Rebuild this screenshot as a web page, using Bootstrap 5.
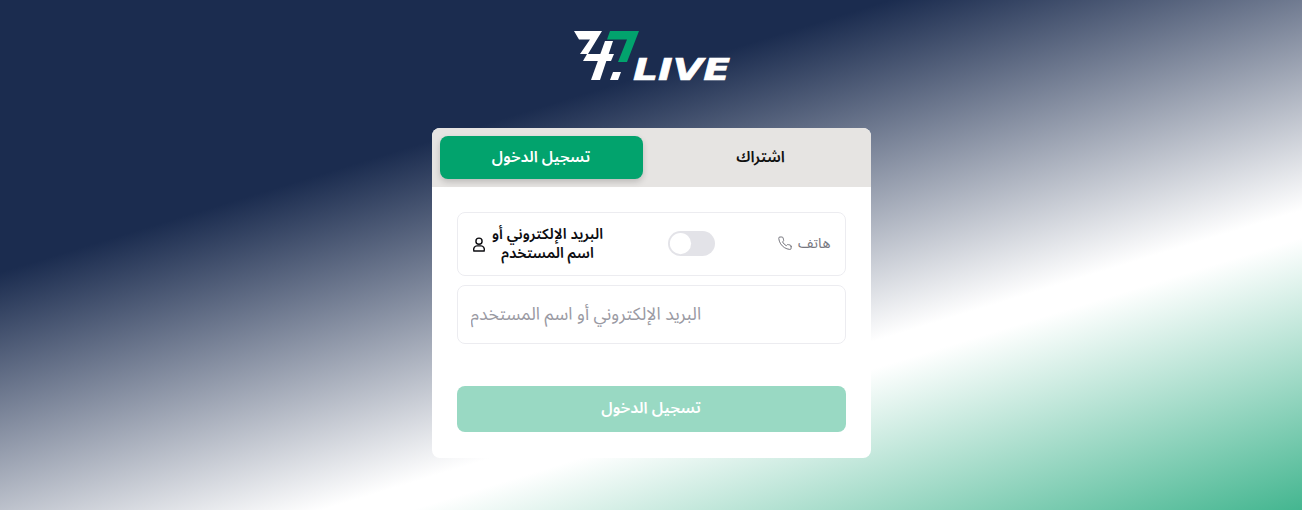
<!DOCTYPE html>
<html lang="ar" dir="rtl">
<head>
<meta charset="utf-8">
<title>77.LIVE</title>
<link rel="stylesheet" href="https://cdn.jsdelivr.net/npm/bootstrap@5.3.0/dist/css/bootstrap.min.css">
<style>
html,body{height:100%}
body{margin:0;height:510px;overflow:hidden;font-family:"Noto Sans","Noto Sans Arabic","DejaVu Sans",sans-serif;
  background:linear-gradient(163deg,#1b2c4f 0%,#1b2c4f 30%,#ffffff 67%,#ffffff 70%,#44b690 100%)}
.brand{height:128px;padding-top:30px}
.brand-box{position:relative;width:158px;height:52px}
.brand-box svg{display:block}
.brand-word{position:absolute;left:61px;top:25px;font:italic 700 31px/28px "DejaVu Sans",sans-serif;color:#fff;direction:ltr;transform:scaleX(1.27);transform-origin:left center;-webkit-text-stroke:.6px #fff}
.panel{width:439px;height:330px;border-radius:8px;background:#fff;overflow:hidden}
.tabbar{height:59px;background:#e6e4e2;padding:8px 0 8px 8px}
.tab-item{width:203px;height:43px;border:0;border-radius:8px;background:transparent;font-size:15.6px;font-weight:600;color:#111;padding:0 0 2px}
.tab-on{background:#02a36d;color:#fff;box-shadow:0 3px 6px rgba(0,0,0,.18)}
.tab-off{width:220px}
.formbody{padding:25px 25px 0}
.mode-row{height:64px;border:1px solid #ececf0;border-radius:8px;padding:0 14px}
.mode-phone{color:#77777f;font-size:14.400px;gap:5px;padding-bottom:3px}
.mode-phone svg{margin-top:2px}
.mode-mail{color:#0c0c10;font-size:14.800px;font-weight:600;line-height:19px;gap:5px;width:133px}
.mode-mail span{width:114px;text-align:center;padding-bottom:3px}
.form-switch .toggle-box{float:none;margin:0;width:47px;height:25px;background-color:#e3e3e8;border:0;
  --bs-form-switch-bg:url("data:image/svg+xml,%3csvg xmlns='http://www.w3.org/2000/svg' viewBox='-4 -4 8 8'%3e%3ccircle r='3.4' fill='%23fff'/%3e%3c/svg%3e")}
.form-switch.toggle-wrap{padding:0;margin:0 0 1px 1px;min-height:0;display:flex}
.entry{height:59px;margin-top:9px;border:1px solid #ececf0;border-radius:8px;padding:0 13px 4px;font-size:17.600px;box-shadow:none}
.entry::placeholder{color:#9a9aa3;text-align:left}
.submit-btn{width:100%;height:46px;margin-top:42px;border:0;border-radius:8px;background:#99d9c3;color:#fff;font-size:15.8px;font-weight:600;padding:0 0 2px}
</style>
</head>
<body>
<header class="brand d-flex justify-content-center">
  <div class="brand-box" dir="ltr">
    <svg width="158" height="52" viewBox="0 0 158 52" aria-hidden="true">
      <polygon fill="#fff" points="2,1 30,1 16,24 8,24 18,9.500 7,9.500"/>
      <polygon fill="#fff" points="15,24 42,24 39,31 11,31"/>
      <polygon fill="#fff" points="33,11 41,11 28,50 19,50"/>
      <polygon fill="#02a36d" points="38,1 67,1 55,32 46,32 55,9.500 35,9.500"/>
      <polygon fill="#fff" points="41,42 49,42 46,50 38,50"/>
    </svg>
    <span class="brand-word">LIVE</span>
  </div>
</header>
<main class="panel mx-auto">
  <div class="tabbar d-flex justify-content-between">
    <button type="button" class="tab-item tab-off btn">اشتراك</button>
    <button type="button" class="tab-item tab-on btn">تسجيل الدخول</button>
  </div>
  <form class="formbody">
    <div class="mode-row d-flex align-items-center justify-content-between">
      <div class="mode-phone d-flex align-items-center">
        <span>هاتف</span>
        <svg width="15" height="15" viewBox="0 0 24 24" fill="none" stroke="currentColor" stroke-width="1.6" stroke-linecap="round" stroke-linejoin="round" aria-hidden="true"><path d="M21 16.5v3a2 2 0 0 1-2.2 2 19.8 19.8 0 0 1-8.6-3 19.5 19.5 0 0 1-6-6 19.8 19.8 0 0 1-3-8.7A2 2 0 0 1 3.2 1.6h3a2 2 0 0 1 2 1.7c.1 1 .4 1.900.7 2.800a2 2 0 0 1-.4 2.100L7.200 9.500a16 16 0 0 0 6 6l1.300-1.300a2 2 0 0 1 2.100-.4c.9.3 1.800.6 2.800.7a2 2 0 0 1 1.600 2z"/></svg>
      </div>
      <div class="form-check form-switch toggle-wrap">
        <input class="form-check-input toggle-box" type="checkbox" role="switch" aria-label="toggle">
      </div>
      <div class="mode-mail d-flex align-items-center">
        <span>البريد الإلكتروني أو اسم المستخدم</span>
        <svg width="14" height="15" viewBox="0 0 15 16" fill="none" stroke="currentColor" stroke-width="1.500" aria-hidden="true"><circle cx="7.500" cy="4.500" r="3.300"/><path d="M2 15c-1-3 1-5.500 3.300-5.500h4.400C12 9.500 14 12 13 15z"/></svg>
      </div>
    </div>
    <input class="form-control entry" type="text" placeholder="البريد الإلكتروني أو اسم المستخدم">
    <button type="button" class="submit-btn btn">تسجيل الدخول</button>
  </form>
</main>
<script src="https://cdn.jsdelivr.net/npm/bootstrap@5.3.0/dist/js/bootstrap.bundle.min.js"></script>
</body>
</html>
